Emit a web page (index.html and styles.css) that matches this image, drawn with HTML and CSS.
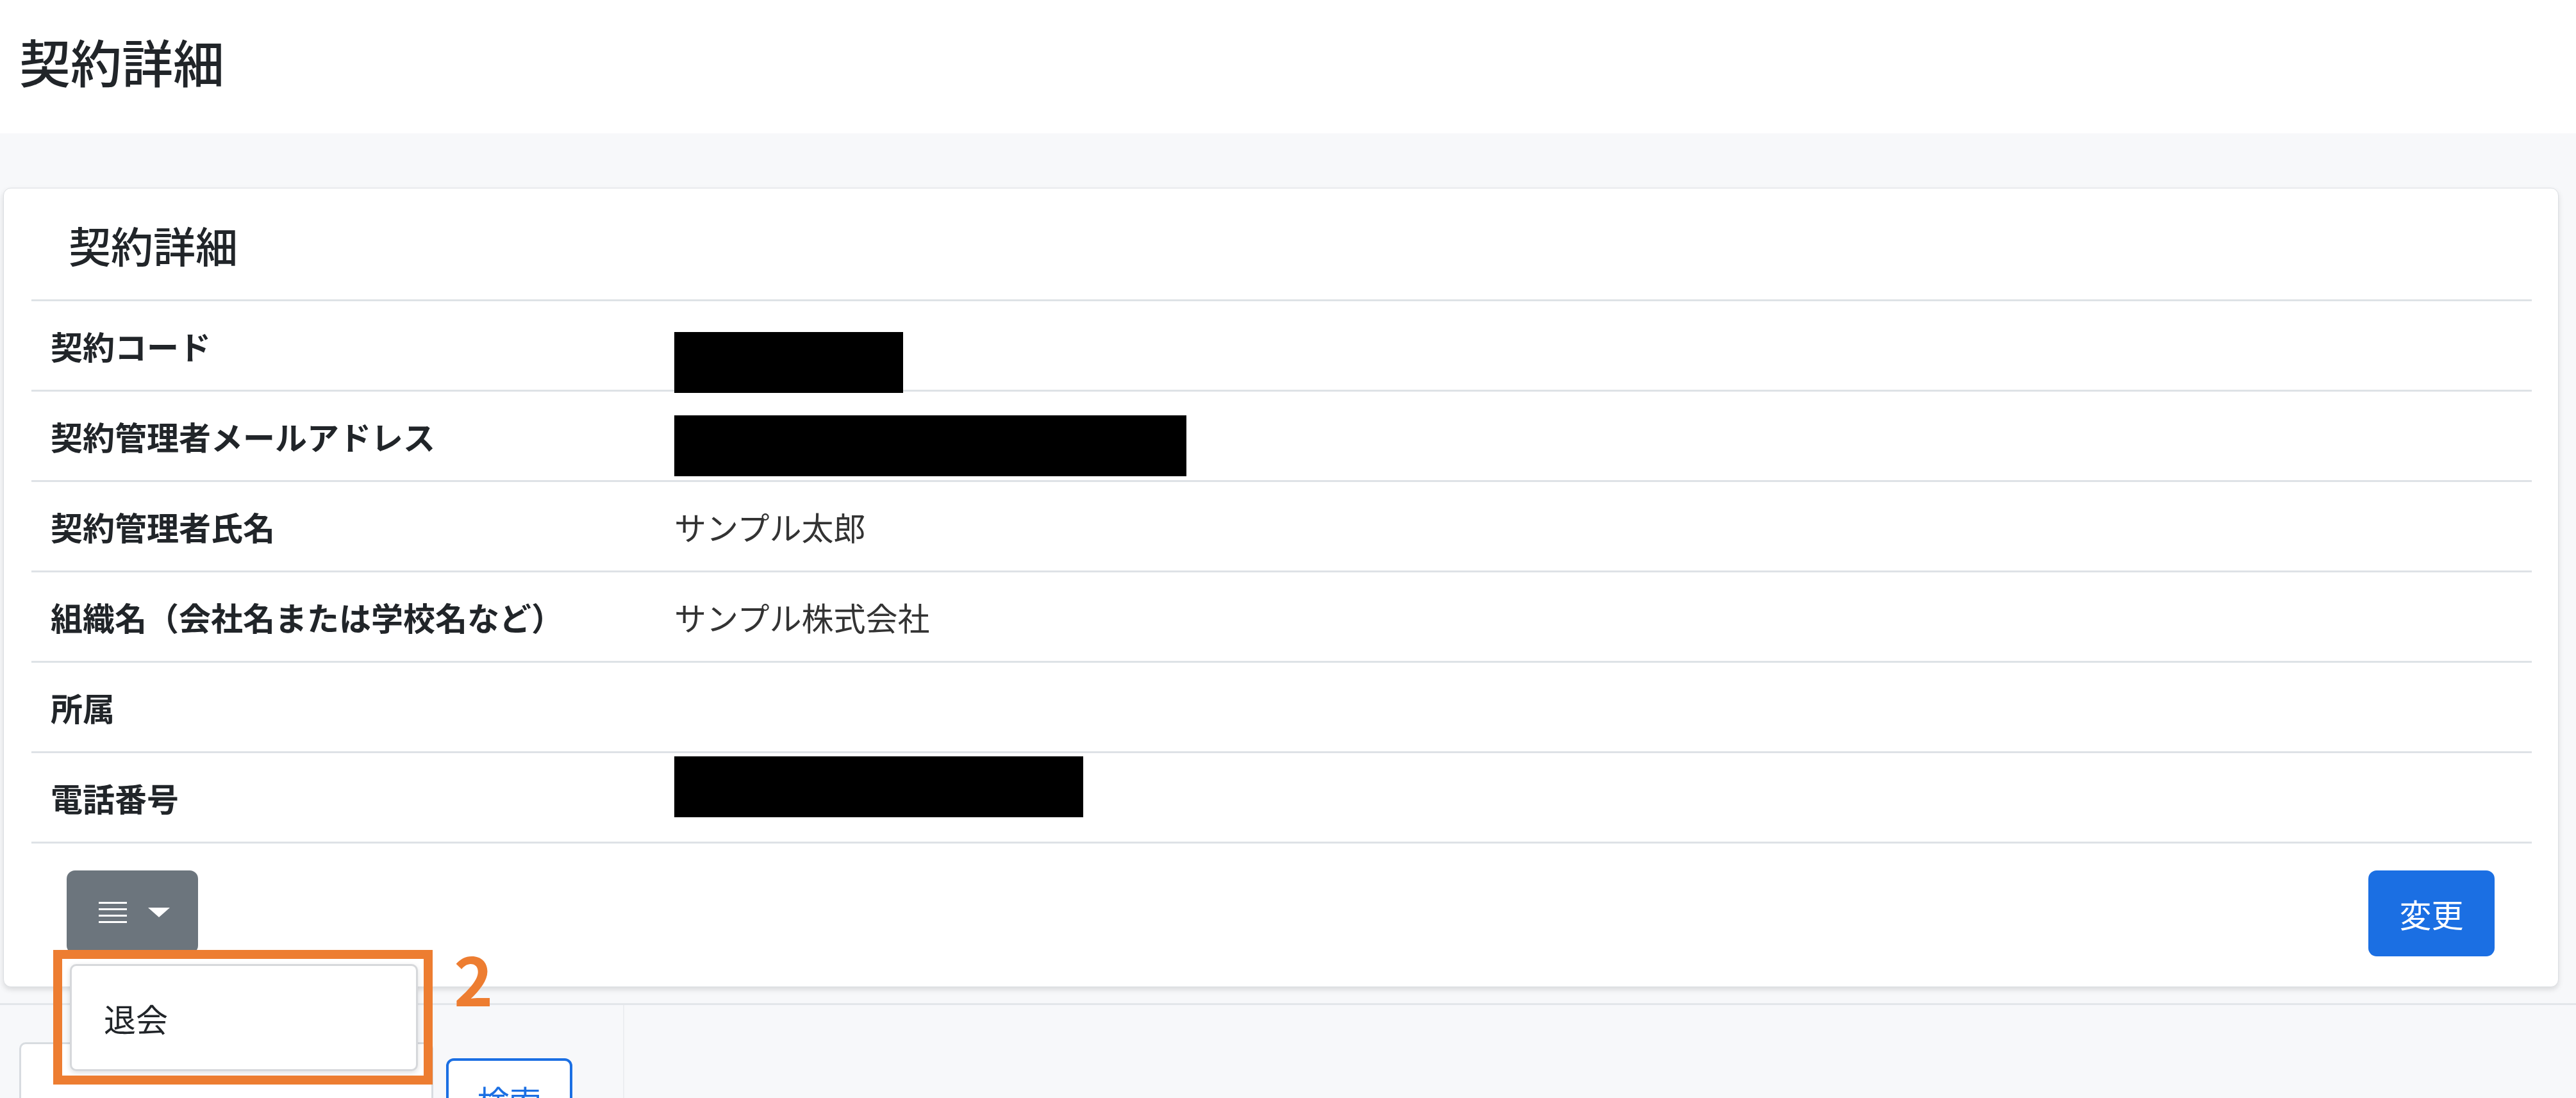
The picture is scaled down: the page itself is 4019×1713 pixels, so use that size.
FILE: index.html
```html
<!DOCTYPE html>
<html lang="ja">
<head>
    <meta charset="UTF-8">
    <meta name="viewport" content="width=device-width, initial-scale=1.0">
    <title>契約詳細</title>
    <link rel="stylesheet" href="styles.css">
</head>
<body>
    <header class="page-header">
        <h1>契約詳細</h1>
    </header>

    <main class="page-main">
        <section class="card">
            <h2 class="card-title">契約詳細</h2>

            <div class="detail-table">
                <div class="detail-row">
                    <div class="detail-label">契約コード</div>
                    <div class="detail-value"><span class="redact redact-code"></span></div>
                </div>
                <div class="detail-row">
                    <div class="detail-label">契約管理者メールアドレス</div>
                    <div class="detail-value"><span class="redact redact-mail"></span></div>
                </div>
                <div class="detail-row">
                    <div class="detail-label">契約管理者氏名</div>
                    <div class="detail-value">サンプル太郎</div>
                </div>
                <div class="detail-row">
                    <div class="detail-label">組織名（会社名または学校名など）</div>
                    <div class="detail-value">サンプル株式会社</div>
                </div>
                <div class="detail-row">
                    <div class="detail-label">所属</div>
                    <div class="detail-value"></div>
                </div>
                <div class="detail-row">
                    <div class="detail-label">電話番号</div>
                    <div class="detail-value"><span class="redact redact-tel"></span></div>
                </div>
            </div>

            <div class="card-footer">
                <div class="dropdown">
                    <button class="btn btn-secondary" type="button">
                        <svg class="menu-icon" width="44" height="33" viewBox="0 0 44 33">
                            <rect x="0" y="0" width="44" height="3" fill="#fff"/>
                            <rect x="0" y="10" width="44" height="3" fill="#fff"/>
                            <rect x="0" y="20" width="44" height="3" fill="#fff"/>
                            <rect x="0" y="30" width="44" height="3" fill="#fff"/>
                        </svg>
                        <span class="caret"></span>
                    </button>
                    <div class="dropdown-menu">
                        <a class="dropdown-item">退会</a>
                    </div>
                    <div class="callout"></div>
                    <div class="callout-num">2</div>
                </div>
                <button class="btn btn-primary" type="button">変更</button>
            </div>
        </section>
    </main>

    <div class="lower">
        <div class="lower-left">
            <div class="search">
                <div class="search-input"></div>
                <button class="btn-outline" type="button">検索</button>
            </div>
        </div>
        <div class="lower-right"></div>
    </div>
</body>
</html>
```

FILE: styles.css
```css
html, body {
    margin: 0;
    padding: 0;
}
body {
    font-family: "Noto Sans CJK JP", "Noto Sans", sans-serif;
    background-color: #f7f8fa;
    color: #212529;
    height: 1713px;
    overflow: hidden;
}
.page-header {
    background: white;
    height: 208px;
    display: flex;
    align-items: center;
    padding-left: 30px;
    box-sizing: border-box;
}
.page-header h1 {
    margin: 0 0 20px 0;
    font-size: 80px;
    font-weight: 500;
    line-height: 1.2;
}
.page-main {
    padding: 85px 27px 0 5px;
}
.card {
    background: white;
    border: 1px solid #dcdfe3;
    border-radius: 12px;
    box-shadow: 0 4px 8px rgba(0, 0, 0, 0.12);
    padding: 0 41px 0 43px;
}
.card-title {
    margin: 0;
    height: 173px;
    display: flex;
    align-items: center;
    padding-left: 58px;
    font-size: 66px;
    font-weight: 500;
}
.detail-table {
    border-bottom: 3px solid #dee2e6;
}
.detail-row {
    display: grid;
    grid-template-columns: 976px 1fr;
    align-items: center;
    height: 141px;
    box-sizing: border-box;
    border-top: 3px solid #dee2e6;
    font-size: 50px;
}
.detail-label {
    padding-left: 30px;
    font-weight: 700;
}
.detail-value {
    padding-left: 27px;
    color: #333;
}
.redact {
    display: block;
    height: 95px;
    background: #000;
    position: relative;
}
.redact-code {
    width: 357px;
    top: 26px;
}
.redact-mail {
    width: 799px;
    top: 15px;
}
.redact-tel {
    width: 638px;
    top: -17px;
}
.card-footer {
    display: flex;
    justify-content: space-between;
    padding: 42px 58px 47px 55px;
}
.btn {
    border: none;
    border-radius: 13px;
    height: 130px;
    font-family: inherit;
    font-size: 50px;
    color: white;
    cursor: pointer;
}
.btn-secondary {
    background: #6c757d;
    width: 205px;
    display: flex;
    align-items: center;
    justify-content: center;
    gap: 33px;
    padding: 0 0 0 6px;
}
.caret {
    width: 0;
    height: 0;
    border-top: 15px solid white;
    border-left: 17px solid transparent;
    border-right: 17px solid transparent;
}
.btn-primary {
    background: #1b6fe3;
    width: 197px;
    height: 134px;
}
.dropdown {
    position: relative;
}
.dropdown-menu {
    position: absolute;
    left: 5px;
    top: 146px;
    width: 537px;
    height: 161px;
    background: white;
    border: 3px solid #d6d8db;
    border-radius: 10px;
    box-shadow: 0 3px 8px rgba(0, 0, 0, 0.12);
    display: flex;
    align-items: center;
    z-index: 2;
}
.dropdown-item {
    padding-left: 50px;
    font-size: 50px;
    color: #212529;
}
.callout {
    position: absolute;
    left: -21px;
    top: 124px;
    width: 564px;
    height: 182px;
    border: 14px solid #ed7d31;
    z-index: 3;
}
.callout-num {
    position: absolute;
    left: 604px;
    top: 105px;
    font-size: 104px;
    font-weight: 700;
    color: #ed7d31;
    line-height: 1.2;
    z-index: 3;
}
.lower {
    margin-top: 25px;
    border-top: 3px solid #e3e6ea;
    display: grid;
    grid-template-columns: 974px 1fr;
    height: 400px;
}
.lower-left {
    border-right: 2px solid #eceef1;
    padding: 58px 0 0 30px;
}
.search {
    display: flex;
    align-items: flex-start;
    gap: 20px;
}
.search-input {
    width: 640px;
    height: 130px;
    background: white;
    border: 3px solid #d8dce0;
    border-radius: 10px;
}
.btn-outline {
    margin-top: 25px;
    width: 197px;
    height: 130px;
    background: white;
    border: 4px solid #1b6fe3;
    border-radius: 12px;
    color: #1b6fe3;
    font-family: inherit;
    font-size: 50px;
    padding: 0;
}
```
